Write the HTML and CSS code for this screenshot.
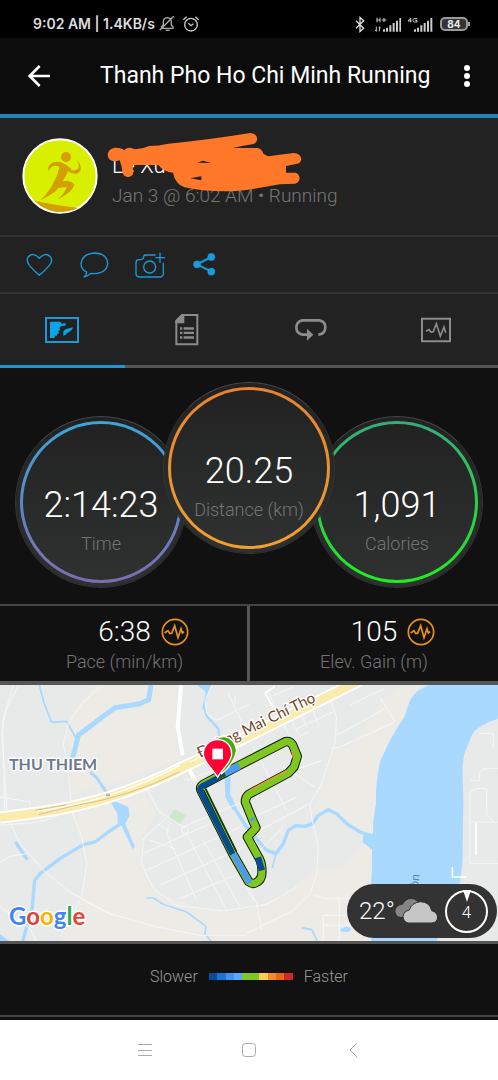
FILE: index.html
```html
<!DOCTYPE html>
<html lang="en">
<head>
<meta charset="utf-8">
<meta name="viewport" content="width=device-width, initial-scale=1">
<title>Thanh Pho Ho Chi Minh Running</title>
<link rel="stylesheet" href="styles.css">
</head>
<body>
<div class="status">
  <span class="status-time">9:02 AM | 1.4KB/s</span>
  <svg class="icon" width="16" height="18" viewBox="0 0 48 54" fill="none" stroke="#aaa" stroke-width="4"><path d="M8 40V35L13 30V20Q13 9 25 8Q37 9 37 20V30L42 36V40ZM20 46H32M2 46L44 4"/></svg>
  <svg class="icon alarm" width="18" height="18" viewBox="0 0 54 54" fill="none" stroke="#ccc" stroke-width="4"><circle cx="27" cy="29" r="19"/><path d="M4 14L14 5M50 14L40 5M19 25L27 32L34 26"/></svg>
  <span class="status-gap"></span>
  <svg class="icon" width="10" height="17" viewBox="0 0 30 50" fill="none" stroke="#ddd" stroke-width="4"><path d="M3 14L26 36L15 46V4L26 14L3 36"/></svg>
  <svg class="icon signal-a" width="27" height="17" viewBox="378 44 81 51" fill="#ccc"><path d="M402 84h6v7h-6zM411 79h6v12h-6zM421 72h6v19h-6zM431 65h6v26h-6zM441 58h6v33h-6zM451 50h5v41h-5z"/><path d="M384 49V63M393 49V63M384 56H393M398 56H412M405 50V62M382 76V90M378 85L382 90M391 90V76L395 81" fill="none" stroke="#ccc" stroke-width="3"/></svg>
  <svg class="icon signal-b" width="26" height="17" viewBox="474 44 78 51" fill="#ccc"><path d="M495 84h6v7h-6zM504 79h6v12h-6zM514 72h6v19h-6zM524 65h6v26h-6zM534 58h6v33h-6zM544 50h6v41h-6z"/><path d="M485 63V50L477 59H488M505 52H495Q492 52 492 57Q492 62 496 62H504V57H499" fill="none" stroke="#ccc" stroke-width="3"/></svg>
  <span class="battery">84</span>
</div>

<header class="appbar">
  <button class="plain back" aria-label="Back"><svg width="24" height="24" viewBox="0 0 72 72" fill="none" stroke="#fff" stroke-width="8"><path d="M69 36H8M38 6L8 36L38 66"/></svg></button>
  <h1>Thanh Pho Ho Chi Minh Running</h1>
  <button class="plain more" aria-label="More options"><svg width="8" height="24" viewBox="0 0 8 24" fill="#fff"><circle cx="4" cy="4" r="3"/><circle cx="4" cy="12" r="3"/><circle cx="4" cy="20" r="3"/></svg></button>
</header>

<section class="profile">
  <svg class="avatar" width="76" height="76" viewBox="66 54 228 228">
    <circle cx="180" cy="168" r="110" fill="#d9ef00" stroke="#fff" stroke-width="6"/>
    <g fill="#d39f05"><circle cx="198" cy="111" r="15"/>
    <path d="M144 154Q143 134 158 128Q176 122 190 130Q208 139 215 151Q230 153 236 145Q238 131 229 119Q242 129 243 147Q237 165 218 160Q210 160 204 153Q200 166 188 184Q211 180 222 192Q222 204 208 216Q194 228 174 238Q194 220 200 202Q184 202 175 205Q163 221 121 241Q140 223 154 201Q162 184 172 165L178 140Q162 133 154 142Q148 146 144 154Z"/>
    <path d="M104 243Q170 256 234 264Q208 277 170 276Q132 270 104 243Z"/></g>
  </svg>
  <div class="who">
    <div class="name"><span>Le Xu</span><span>l</span></div>
    <div class="when">Jan 3 @ 6:02 AM • Running</div>
    <svg class="scribble" width="196" height="60" viewBox="320 36 588 180" fill="#ff7728"><path d="M343 83Q364 82 372 91Q377 82 390 83L404 88Q425 88 446 78Q475 78 504 71Q620 60 750 39Q769 40 771 57Q769 70 756 73Q730 77 698 84H772Q786 88 789 101L803 109L880 99Q901 100 903 117Q902 130 887 132L857 138V158H885Q897 162 898 175Q896 190 884 191L838 193Q770 206 710 213Q620 217 552 202Q524 191 518 158Q490 156 474 135H396Q401 159 396 166Q386 175 373 168Q366 163 364 140L358 121Q326 131 322 106Q322 88 343 83ZM591 128L632 129L608 122ZM570 175L603 181V169Z" fill-rule="evenodd"/></svg>
  </div>
</section>

<div class="actions">
  <button class="plain" aria-label="Like"><svg width="27" height="24" viewBox="76 52 81 72" fill="none" stroke="#189bdb" stroke-width="4"><path d="M116 119Q101 106 86 89Q75 74 83 63Q98 48 116 68Q134 48 149 63Q158 75 146 89Q132 106 116 119Z"/></svg></button>
  <button class="plain" aria-label="Comment"><svg width="29" height="26" viewBox="239 49 87 78" fill="none" stroke="#189bdb" stroke-width="4"><path d="M259 109Q242 101 242 84Q245 55 282 52Q319 53 322 82Q321 111 282 114L271 113Q262 123 250 124Q259 119 259 109Z"/></svg></button>
  <button class="plain" aria-label="Add photo"><svg width="30" height="26" viewBox="404 52 90 78" fill="none" stroke="#189bdb" stroke-width="4"><path d="M466 61H434Q430 62 430 67Q429 74 421 75H415Q407 76 407 84V118Q408 126 416 127H480Q488 126 489 118V84M479 54V84M465 69H494"/><circle cx="448" cy="97" r="18"/></svg></button>
  <button class="plain" aria-label="Share"><svg width="23" height="23" viewBox="580 54 69 69" fill="#189bdb" stroke="#189bdb"><path d="M635 66L592 88L635 110" fill="none" stroke-width="6"/><circle cx="635" cy="66" r="11"/><circle cx="592" cy="88" r="11"/><circle cx="635" cy="110" r="11"/></svg></button>
</div>

<nav class="tabs">
  <button class="plain active" aria-label="Overview"><svg width="34" height="26" viewBox="135 247 102 78"><path d="M138 250H234V322H138Z" fill="none" stroke="#189bdb" stroke-width="6"/><path d="M150 261H181L185 267L198 266L196 273L184 274L178 280L181 286L174 290L178 296L171 298V303H164V310H150ZM190 300Q187 285 202 282L218 278Q219 285 208 291L201 295Q199 302 190 303Z" fill="#0aa4ed"/></svg></button>
  <button class="plain" aria-label="Details"><svg width="24" height="32" viewBox="524 239 72 96"><path d="M545 242H591V330H528V259Z" fill="none" stroke="#8b8b8b" stroke-width="6"/><path d="M525 260L545 240H552V267H525ZM539 279h7v7h-7zM550 279h31v7h-31zM539 292h7v7h-7zM550 292h31v7h-31zM539 306h7v7h-7zM550 306h31v7h-31z" fill="#8b8b8b"/></svg></button>
  <button class="plain" aria-label="Laps"><svg width="32" height="24" viewBox="141 94 96 72"><path d="M178 144H164Q145 141 145 122Q146 104 163 101H214Q232 104 232 122Q231 142 211 144" fill="none" stroke="#8b8b8b" stroke-width="8"/><path d="M177 126L196 144L177 162Z" fill="#8b8b8b"/></svg></button>
  <button class="plain" aria-label="Charts"><svg width="30" height="26" viewBox="516 83 90 78" fill="none" stroke="#8b8b8b"><path d="M519 88H603V156H519Z" stroke-width="6"/><path d="M531 126L540 121L546 128L553 127L562 103L574 140L585 113L590 130" stroke-width="5"/></svg></button>
</nav>

<main>
  <section class="rings">
    <div class="ring time"><span class="big">2:14:23</span><span class="label">Time</span></div>
    <div class="ring distance"><span class="big">20.25</span><span class="label">Distance (km)</span></div>
    <div class="ring calories"><span class="big">1,091</span><span class="label">Calories</span></div>
  </section>

  <section class="stats">
    <div class="stat">
      <div class="stat-row"><span class="mid">6:38</span><svg class="trend" width="28" height="28" viewBox="482 66 84 84" fill="none" stroke="#e8921e" stroke-width="5"><circle cx="524" cy="108" r="38"/><path d="M493 111L503 104L508 112H514L523 89L533 125L542 98L546 111L551 107"/></svg></div>
      <span class="label">Pace (min/km)</span>
    </div>
    <div class="stat">
      <div class="stat-row"><span class="mid">105</span><svg class="trend" width="28" height="28" viewBox="482 66 84 84" fill="none" stroke="#e8921e" stroke-width="5"><circle cx="524" cy="108" r="38"/><path d="M493 111L503 104L508 112H514L523 89L533 125L542 98L546 111L551 107"/></svg></div>
      <span class="label">Elev. Gain (m)</span>
    </div>
  </section>

  <section class="map">
    <svg class="map-art" viewBox="0 0 498 256" role="img" aria-label="Route map">
      <g transform="scale(.33333) translate(0 -14)" fill="none" stroke-linejoin="round">
        <path d="M0 14H1494V782H0Z" fill="#e8e9e9"/>
        <!-- open ground -->
        <g fill="#ecebe6">
          <path d="M290 14H530L526 200L545 235L320 315L215 340L208 300L215 220L195 150L225 70Z"/>
          <path d="M215 385L430 320L440 355L470 400L425 470V560L480 640L600 685L740 690L860 640L950 560H1030L1120 460V782H180L245 660L262 560Z"/>
          <path d="M1140 60L1210 14H1260L1140 240L1120 460L1060 450L985 390L935 400L960 330L1000 210L1060 200Z"/>
        </g>
        <!-- canals and river -->
        <g stroke="#a9d9ff">
          <path d="M118 14L132 68L155 126L200 123L226 170" stroke-width="5"/>
          <path d="M453 14L446 58L420 70L345 82L300 115L235 165L215 245" stroke-width="15"/>
          <path d="M270 275L290 292L322 340" stroke-width="9"/>
          <path d="M362 430L325 455L285 485L250 493L180 535L120 580L104 600L97 680L68 782" stroke-width="10"/>
          <path d="M46 485L82 538" stroke-width="10"/>
          <path d="M604 14L622 30L611 80L622 110L655 145L659 200" stroke-width="7"/>
          <path d="M440 653H460L490 672L560 695L618 738L615 760L632 782" stroke-width="5"/>
          <path d="M684 285L680 330L708 390L740 440L765 470L800 510L828 520L850 490L865 450L887 436L915 438L937 430L955 405L985 388L1010 400L1040 430L1080 455L1120 468" stroke-width="10"/>
          <path d="M828 520L817 563M905 742L935 748L952 782" stroke-width="5"/>
        </g>
        <path d="M590 14H636L622 38ZM327 355L350 365L385 380L389 405L376 430L405 500L398 507L364 435L354 430L352 400ZM674 290H692L690 345L704 385L698 390L676 350ZM0 762L28 782H0ZM1020 747L1040 738L1054 746L1046 754H1025Z" fill="#a9d9ff"/>
        <path d="M1290 14Q1250 25 1230 60L1213 110Q1180 160 1165 190L1140 245Q1126 310 1128 370L1120 420L1119 460L1090 462L1088 485L1116 508V570L1112 620L1114 782H1310L1380 605Q1390 550 1388 490L1390 360L1387 260L1393 220L1415 165Q1430 135 1494 115V14Z" fill="#a9d9ff"/>
        <path d="M523 386L558 406L540 432L506 412Z" fill="#cbeacb"/>
        <!-- minor streets -->
        <g stroke="#f5f6f6" stroke-width="3">
          <path d="M55 14L18 90L5 160L14 270L22 410L60 490L130 570L210 635L330 700L470 740L600 765H740"/>
          <path d="M40 14L8 120L14 390M300 20L245 70L205 130L190 190L205 270L215 390L245 470L260 550L245 650L180 770"/>
          <path d="M0 545L30 528L75 521M0 680L90 745L110 782M240 655L340 705M1 435L120 425L220 390M0 350L90 365V380"/>
          <path d="M636 14L615 60L620 100L650 120L750 70M440 325L475 390L550 440L750 355M500 412L430 475L425 550L460 625L530 675L670 692L800 672L890 620"/>
          <path d="M510 425L500 460L520 505L590 660M560 460L680 690M610 480L720 680M430 520L630 430M440 570L720 440M480 615L730 500M540 655L740 570M475 430L510 455M450 480L525 505M560 300L640 270L700 240M565 270L610 360L760 660"/>
          <circle cx="555" cy="450" r="10"/>
          <path d="M685 40L735 145M705 70V45M800 25L860 150L910 240M820 45L880 20M985 40L1010 110L1005 190L960 320L930 370L935 410L955 500L950 580L930 640L880 690L740 760"/>
          <path d="M995 205L1020 200L1185 125L1140 50M1010 165L1155 85M1050 75L1150 25M880 150L1000 95M895 170L925 155M870 110L895 160M900 95L920 140M935 85L955 130M850 260L945 320M830 290L965 240M740 470L930 370M740 420L890 350M780 510L850 440M760 200L860 390"/>
          <path d="M740 610L770 670L785 750M940 645L980 655H1050M970 705H1060M970 735H1060M970 705V782M1018 655V782"/>
          <path d="M1438 160H1480V200M1410 300H1440Q1430 270 1460 264H1494M1410 425H1494M1410 340V550H1494M1410 340Q1415 320 1460 325V400L1480 425"/>
        </g>
        <path d="M543 14L533 140L548 225M570 270L585 300" stroke="#fff" stroke-width="12"/>
        <path d="M795 38L820 82M795 38L825 18M1357 560V590H1400M1428 428V525" stroke="#fff" stroke-width="5"/>
        <!-- main road -->
        <path d="M0 412L105 398Q330 370 545 262L740 170L1080 0" stroke="#fff" stroke-width="36"/>
        <path d="M0 412L105 398Q330 370 545 262L740 170L1080 0" stroke="#fbebaf" stroke-width="25"/>
        <path d="M110 393Q330 365 540 255M570 245L740 165" stroke="#fff" stroke-width="4"/>
        <path d="M106 390L200 373M115 403L215 378Q390 350 540 274" stroke="#d6c283" stroke-width="3"/>
        <path d="M318 344H330" stroke="#9bbbc5" stroke-width="7"/>
        <!-- recorded route -->
        <g transform="translate(510 120)" stroke-linecap="round">
          <path d="M145 168L100 192Q88 200 94 212L188 400L236 484Q246 492 256 488Q276 480 276 455Q276 430 268 415L232 350L258 322L247 297L226 245Q226 230 236 222L355 158L372 140L382 108L368 74Q360 61 346 64L208 135L145 168" stroke="#101c05" stroke-width="28"/>
          <path d="M145 168L100 192Q88 200 94 212L188 400L236 484Q246 492 256 488Q276 480 276 455Q276 430 268 415L232 350L258 322L247 297L226 245Q226 230 236 222L355 158L372 140L382 108L368 74Q360 61 346 64L208 135L145 168" stroke="#7fc623" stroke-width="22"/>
          <g stroke-linecap="butt">
            <path d="M100 208L192 396" stroke="#12330d" stroke-width="20"/>
            <path d="M103 206L196 396L244 480" stroke="#7fc623" stroke-width="3"/>
            <path d="M145 172L96 198Q86 203 92 213L188 402" stroke="#064b8f" stroke-width="17"/>
            <path d="M190 401L239 488" stroke="#4a9cf3" stroke-width="17"/>
            <path d="M208 137L165 158" stroke="#4a9cf3" stroke-width="21"/>
            <path d="M165 160L142 171" stroke="#1d4a56" stroke-width="16"/>
            <path d="M264 411L276 450" stroke="#064b8f" stroke-width="19"/>
            <path d="M244 293L250 300" stroke="#4a9cf3" stroke-width="12"/>
            <path d="M240 209L350 151M366 92L370 114" stroke="#e99b2e" stroke-width="4"/>
          </g>
        </g>
      </g>
      <text class="street" transform="translate(200 73) rotate(-26)">Đường Mai Chí Thọ</text>
      <text class="river" transform="translate(418 203) rotate(-84)">òn</text>
      <g transform="scale(.33333) translate(0 -14)">
        <path d="M672 168Q640 170 632 208Q632 230 652 260L665 280Q703 250 710 211Q706 174 672 168Z" fill="#45ac08" stroke="#fff" stroke-width="4"/>
        <path d="M653 178C628 178 610 196 610 221C610 246 640 266 653 291C666 266 695 246 695 221C695 196 678 178 653 178Z" fill="#ff0037" stroke="#fff" stroke-width="4"/>
        <path d="M637 205H669V237H637Z" fill="#fff"/>
      </g>
      <text class="district" x="9" y="85">THU THIEM</text>
      <text class="google" x="9" y="240"><tspan fill="#4285f4">G</tspan><tspan fill="#db4437">o</tspan><tspan fill="#f4b400">o</tspan><tspan fill="#4285f4">g</tspan><tspan fill="#34a853">l</tspan><tspan fill="#ea4335">e</tspan></text>
    </svg>
    <div class="weather">
      <span class="temp">22°</span>
      <svg width="42" height="26" viewBox="437 651 126 78"><path d="M455 708Q439 706 438 689Q441 672 460 671Q469 653 488 654Q506 657 512 675L480 708Z" fill="#858585"/><path d="M477 726Q462 723 461 706Q463 691 480 687Q487 665 513 662Q542 663 547 689Q564 693 565 710Q563 725 547 726Z" fill="#c6c6c6" stroke="#333" stroke-width="3"/></svg>
      <span class="wind">4<svg class="wind-mark" width="8" height="12" viewBox="0 0 8 12"><path d="M0 0H8L4 12Z" fill="#fff"/></svg></span>
    </div>
  </section>

  <section class="legend">
    <span>Slower</span>
    <span class="scale"><i class="c1"></i><i class="c2"></i><i class="c3"></i><i class="c4"></i><i class="c5"></i><i class="c5"></i><i class="c6"></i><i class="c7"></i><i class="c8"></i><i class="c9"></i></span>
    <span>Faster</span>
  </section>
</main>

<footer class="sysnav">
  <button class="plain" aria-label="Recent apps"><svg width="16" height="14" viewBox="0 0 16 14" stroke="#aaa"><path d="M1 1.500H15M1 7.500H15M1 12.500H15"/></svg></button>
  <button class="plain" aria-label="Home"><svg width="16" height="16" viewBox="0 0 16 16" fill="none" stroke="#aaa"><rect x="1.500" y="1.500" width="13" height="13" rx="3"/></svg></button>
  <button class="plain" aria-label="Back"><svg width="10" height="16" viewBox="0 0 10 16" fill="none" stroke="#aaa"><path d="M9 1L2 8L9 15"/></svg></button>
</footer>
</body>
</html>
```
FILE: styles.css
```css
* { box-sizing: border-box; }
body {
  margin: 0;
  min-height: 100vh;
  background: #fff;
  color: #fff;
  font-family: Roboto, "Noto Sans", sans-serif;
}
svg { display: block; flex: none; }
.plain {
  display: flex;
  align-items: center;
  justify-content: center;
  padding: 0;
  border: 0;
  background: none;
}

.status {
  display: flex;
  align-items: center;
  height: 38px;
  padding: 10px 30px 0 33px;
  background: #000;
}
.status-time { font: 600 14px/20px Inter, sans-serif; color: #ddd; margin-right: 4px; }
.alarm { margin-left: 7px; }
.status-gap { flex: 1; }
.signal-a { margin-left: 10px; }
.signal-b { margin-left: 5px; }
.battery {
  position: relative;
  width: 28px;
  margin-left: 7px;
  border: 2px solid #999;
  border-radius: 5px;
  background: #333;
  color: #eee;
  font: 700 10px/10px Inter, sans-serif;
  text-align: center;
}
.battery::after {
  content: "";
  position: absolute;
  top: 3px;
  right: -4px;
  width: 2px;
  height: 4px;
  background: #999;
}

.appbar {
  display: flex;
  align-items: center;
  height: 80px;
  padding: 0 27px;
  border-bottom: 4px solid #1d85bb;
  background: #0c0c0c;
}
.appbar h1 {
  flex: 1;
  margin: 0 0 0 49px;
  font-size: 23px;
  line-height: 32px;
  font-weight: 400;
  white-space: nowrap;
}

.profile {
  display: flex;
  gap: 14px;
  height: 117px;
  padding: 20px 22px;
  background: #222;
}
.who { position: relative; padding-top: 14px; }
.name {
  display: flex;
  justify-content: space-between;
  width: 174px;
  font-size: 22px;
  line-height: 28px;
  font-weight: 300;
}
.when { font-size: 19px; line-height: 32px; font-weight: 300; color: #777; }
.scribble { position: absolute; left: -5px; top: -6px; }

.actions {
  display: flex;
  height: 57px;
  padding-left: 12px;
  border-top: 2px solid #333;
  background: #222;
}
.actions .plain { width: 55px; }

.tabs {
  display: grid;
  grid-template-columns: repeat(4, 1fr);
  height: 76px;
  border-top: 2px solid #333;
  background: #222;
}
.tabs .plain { border-bottom: 3px solid #555; }
.tabs .active { border-bottom-color: #1e96d3; }

main { background: #111; }
.rings { display: flex; justify-content: center; padding: 14px 0 16px; }
.ring {
  position: relative;
  display: flex;
  flex-direction: column;
  align-items: center;
  flex: none;
  width: 172px;
  height: 172px;
  margin: 34px -12px 0;
  padding-top: 67px;
  border: 1px solid #333;
  border-top-color: #484848;
  border-radius: 50%;
  background: linear-gradient(#222, #2f3131) padding-box;
}
.ring.distance { z-index: 1; margin-top: 0; }
.ring::before {
  content: "";
  position: absolute;
  inset: 4px;
  border: 3px solid transparent;
  border-radius: 50%;
  background: linear-gradient(#222, #2f3131) padding-box, var(--edge) border-box;
}
.time { --edge: linear-gradient(#3ba5d8, #7f6bb0); }
.distance { --edge: linear-gradient(#e88232, #f0a030); }
.calories { --edge: linear-gradient(#35ad7b, #1fee1f); }
.ring span { position: relative; }
.big { font-size: 36px; line-height: 42px; font-weight: 300; }
.label { font-size: 18px; line-height: 24px; font-weight: 300; color: #747474; }
.ring .label { margin-top: 6px; }

.stats {
  display: grid;
  grid-template-columns: 1fr 1fr;
  border-top: 2px solid #444;
  border-bottom: 4px solid #555;
}
.stat { display: flex; flex-direction: column; align-items: center; padding: 8px 0 7px; }
.stat + .stat { border-left: 3px solid #555; margin-left: -2px; }
.stat-row {
  display: grid;
  grid-template-columns: 1fr auto 1fr;
  gap: 10px;
  align-items: center;
  width: 100%;
}
.mid { grid-column: 2; font-size: 28px; line-height: 36px; font-weight: 300; }

.map { position: relative; border-bottom: 3px solid #555; }
.map-art { width: 100%; height: auto; }
.street, .district, .google, .river {
  font-family: Lato, "Noto Sans", sans-serif;
  paint-order: stroke;
  stroke: #fff;
  stroke-width: 3px;
  stroke-linejoin: round;
}
.street { font-size: 15px; fill: #70442a; }
.district { font-size: 16px; font-weight: 700; fill: #6b7a90; }
.google { font-size: 24px; font-weight: 700; }
.river { font-size: 12px; fill: #4a86c8; stroke: none; }
.weather {
  position: absolute;
  right: 1px;
  bottom: 3px;
  display: flex;
  align-items: center;
  height: 54px;
  width: 150px;
  padding: 0 9px 0 12px;
  border-radius: 27px;
  background: #333;
}
.temp { font-size: 24px; line-height: 28px; font-weight: 300; }
.wind {
  position: relative;
  width: 43px;
  height: 43px;
  margin-left: auto;
  border: 2px solid #fff;
  border-radius: 50%;
  font-size: 17px;
  line-height: 41px;
  font-weight: 300;
  text-align: center;
}
.wind-mark { position: absolute; top: -2px; left: 16px; }

.legend {
  display: flex;
  align-items: center;
  justify-content: center;
  gap: 11px;
  height: 76px;
  padding-bottom: 11px;
  font-size: 16px;
  line-height: 24px;
  font-weight: 300;
  color: #999;
  background: linear-gradient(#444, #444) 0 71px / 100% 2px no-repeat;
}
.scale { display: grid; grid-template-columns: repeat(10, 1fr); width: 84px; height: 7px; }
.c1 { background: #054d9e; }
.c2 { background: #1b75d0; }
.c3 { background: #3e94f0; }
.c4 { background: #58a9fb; }
.c5 { background: #7fc623; }
.c6 { background: #facb55; }
.c7 { background: #f58c2a; }
.c8 { background: #e9690f; }
.c9 { background: #d12424; }

.sysnav { display: flex; justify-content: center; height: 60px; background: #fff; }
.sysnav .plain { width: 104px; }
```
